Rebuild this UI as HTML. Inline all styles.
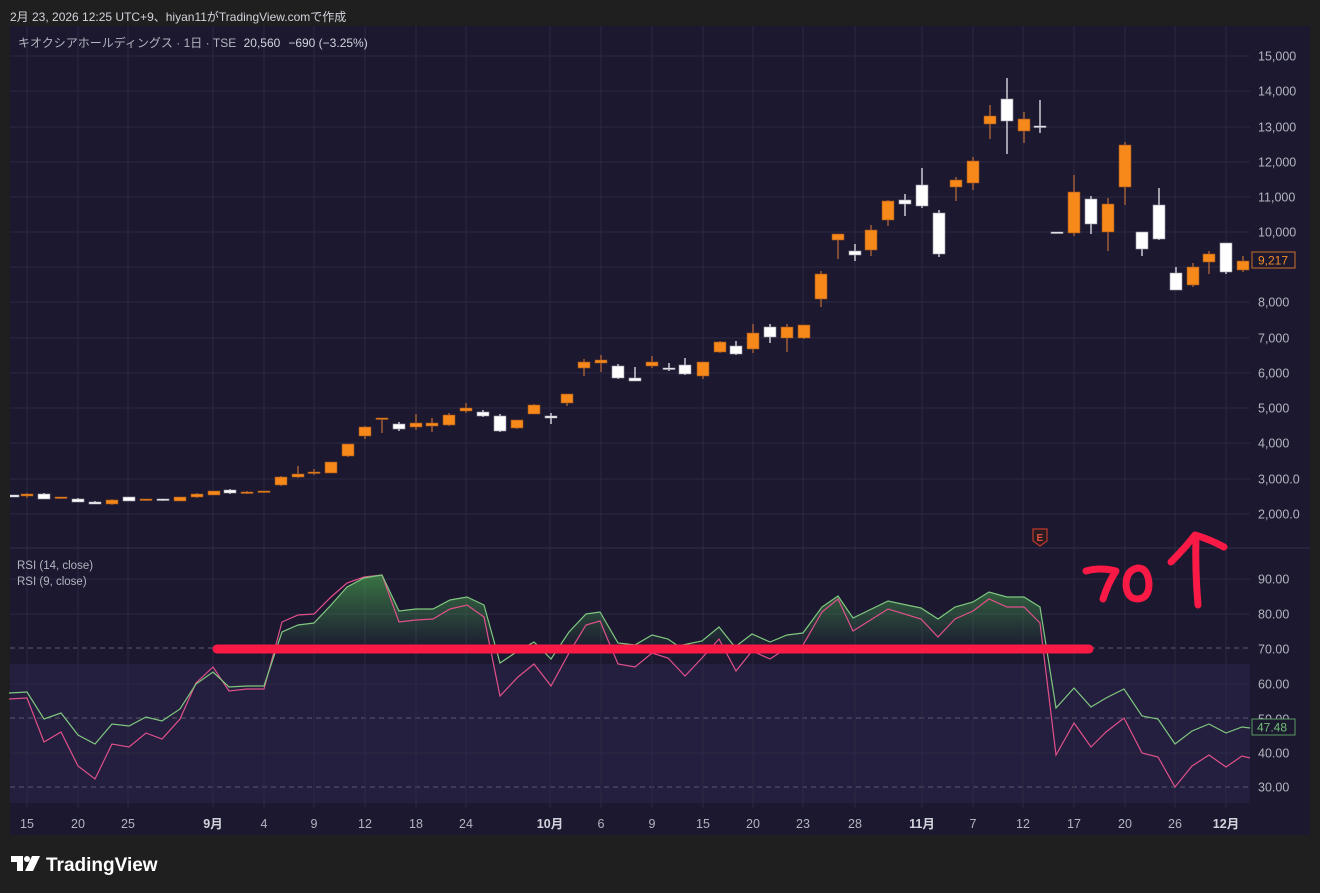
<!DOCTYPE html>
<html><head><meta charset="utf-8">
<style>
html,body{margin:0;padding:0;background:#1f1f1f;width:1320px;height:893px;overflow:hidden;font-family:"Liberation Sans","Noto Sans CJK JP",sans-serif;}
svg text{font-family:"Liberation Sans","Noto Sans CJK JP",sans-serif;}
</style></head><body>
<svg id="s" width="1320" height="893" xmlns="http://www.w3.org/2000/svg">
<defs>
<linearGradient id="gf" x1="0" y1="575" x2="0" y2="648" gradientUnits="userSpaceOnUse">
<stop offset="0" stop-color="#4caf50" stop-opacity="0.6"/>
<stop offset="1" stop-color="#4caf50" stop-opacity="0.02"/>
</linearGradient>
<clipPath id="above"><rect x="10" y="548" width="1240" height="100"/></clipPath>
<clipPath id="plot"><rect x="10" y="26" width="1240" height="782"/></clipPath>
</defs>
<rect x="0" y="0" width="1320" height="893" fill="#1f1f1f"/>
<text x="10" y="21" font-size="12" fill="#d1d4dc">2月 23, 2026 12:25 UTC+9、hiyan11がTradingView.comで作成</text>
<rect x="10" y="26" width="1300" height="809" fill="#1b1830"/>
<rect x="10" y="664" width="1240" height="139" fill="#241f3e"/>
<g id="grid" stroke="#2b2843" stroke-width="1"></g>
<line x1="10" y1="548" x2="1310" y2="548" stroke="#33304a" stroke-width="1"/>
<g id="rsi"></g>
<g id="candles" clip-path="url(#plot)"></g>
<g id="axis" font-size="12.5" fill="#b2b5be"></g>
<text x="18" y="47" font-size="12" fill="#b2b5be">キオクシアホールディングス · 1日 · TSE <tspan fill="#d1d4dc" dx="4">20,560</tspan><tspan fill="#d1d4dc" dx="8">−690 (−3.25%)</tspan></text>
<text x="17" y="569" font-size="11.5" fill="#b2b5be">RSI (14, close)</text>
<text x="17" y="585" font-size="11.5" fill="#b2b5be">RSI (9, close)</text>
<!-- E icon -->
<path d="M1033 529 h14 v12 l-7 5 l-7 -5 z" fill="#2a1a22" stroke="#c0392b" stroke-width="1.2"/>
<text x="1036.5" y="541" font-size="10" fill="#e05040" font-weight="bold">E</text>
<!-- handwriting -->
<line x1="217" y1="649" x2="1089" y2="649" stroke="#fb1a46" stroke-width="9" stroke-linecap="round"/>
<g fill="none" stroke="#fb1a46" stroke-width="7" stroke-linecap="round" stroke-linejoin="round">
<path d="M1086 571 q14 -4 30 0 q-8 12 -13 28"/>
<path d="M1138 568 q-12 2 -12 17 q1 14 12 14 q11 -1 11 -15 q-1 -16 -11 -16z"/>
<path d="M1198 605 q-3 -35 -2 -69"/>
<path d="M1171 562 q14 -14 24 -27 q14 4 29 12"/>
</g>
<!-- tags -->
<rect x="1252" y="252" width="43" height="16" fill="#1b1830" stroke="#c8702a" stroke-width="1"/>
<text x="1258" y="264.5" font-size="12" fill="#f08a2a">9,217</text>
<rect x="1252" y="719" width="43" height="16" fill="#1b1830" stroke="#5a9a62" stroke-width="1"/>
<text x="1257" y="731.5" font-size="12" fill="#6fbf73">47.48</text>
<!-- logo -->
<g fill="#ffffff">
<path d="M11 856 h12 v15 h-6 v-9 h-6 z"/>
<circle cx="27" cy="859" r="3"/>
<path d="M32 856 h8 l-7 15 h-8 z"/>
</g>
<text x="46" y="871" font-size="19" font-weight="bold" fill="#ffffff">TradingView</text>
<script>
const NS="http://www.w3.org/2000/svg";
function el(p,t,a,txt){const e=document.createElementNS(NS,t);for(const k in a)e.setAttribute(k,a[k]);if(txt!=null)e.textContent=txt;p.appendChild(e);return e;}
const grid=document.getElementById('grid'),axis=document.getElementById('axis');
const py=[56,91,127,162,197,232,267,302,338,373,408,443,479,514];
const pl=["15,000","14,000","13,000","12,000","11,000","10,000","9,000","8,000","7,000","6,000","5,000","4,000","3,000.0","2,000.0"];
py.forEach((y,i)=>{el(grid,'line',{x1:10,x2:1250,y1:y,y2:y});if(i!=6)el(axis,'text',{x:1258,y:y+4.5},pl[i]);});
const ry=[579,614,684,753];
ry.forEach(y=>el(grid,'line',{x1:10,x2:1250,y1:y,y2:y}));
[[579,"90.00"],[614,"80.00"],[649,"70.00"],[684,"60.00"],[719,"50.00"],[753,"40.00"],[787,"30.00"]].forEach(a=>el(axis,'text',{x:1258,y:a[0]+4.5},a[1]));
[648,718,787].forEach(y=>el(grid,'line',{x1:10,x2:1250,y1:y,y2:y,stroke:'#5d5a72','stroke-dasharray':'5,4'}));
const tx=[[27,"15"],[78,"20"],[128,"25"],[213,"9月",1],[264,"4"],[314,"9"],[365,"12"],[416,"18"],[466,"24"],[550,"10月",1],[601,"6"],[652,"9"],[703,"15"],[753,"20"],[803,"23"],[855,"28"],[922,"11月",1],[973,"7"],[1023,"12"],[1074,"17"],[1125,"20"],[1175,"26"],[1226,"12月",1]];
tx.forEach(a=>{el(grid,'line',{x1:a[0],x2:a[0],y1:26,y2:808});const t=el(axis,'text',{x:a[0],y:828,'text-anchor':'middle'},a[1]);if(a[2]){t.setAttribute('font-weight','bold');t.setAttribute('fill','#d1d4dc');}});
// candles [x,top,bot,wt,wb,type]
const C=[[13,495,497,495,497,'w'],[27,494,496,493,498,'o'],[44,494,499,493,499,'w'],[61,497,498,497,499,'o'],[78,499,502,498,502,'w'],[95,502,504,501,504,'w'],[112,500,504,499,505,'o'],[129,497,501,497,501,'w'],[146,499,500,499,501,'o'],[163,499,500,499,501,'w'],[180,497,501,497,501,'o'],[197,494,497,493,498,'o'],[214,491,495,491,495,'o'],[230,490,493,489,494,'w'],[247,492,493,491,494,'o'],[264,491,492,491,493,'o'],[281,477,485,476,486,'o'],[298,474,477,466,478,'o'],[314,472,473,469,475,'o'],[331,462,473,462,473,'o'],[348,444,456,444,457,'o'],[365,427,436,426,439,'o'],[382,418,419,418,433,'o'],[399,424,429,422,431,'w'],[416,423,427,414,430,'o'],[432,423,426,418,432,'o'],[449,415,425,413,426,'o'],[466,408,411,403,413,'o'],[483,412,416,410,417,'w'],[500,416,431,414,432,'w'],[517,420,428,420,429,'o'],[534,405,414,404,414,'o'],[551,416,418,413,424,'w'],[567,394,403,394,406,'o'],[584,362,368,359,376,'o'],[601,360,363,355,372,'o'],[618,366,378,364,379,'w'],[635,378,381,367,381,'w'],[652,362,366,356,368,'o'],[669,368,368.8,363,371,'w'],[685,365,374,358,375,'w'],[703,362,376,362,379,'o'],[720,342,352,341,353,'o'],[736,346,354,341,355,'w'],[753,333,349,324,353,'o'],[770,327,337,324,343,'w'],[787,327,338,324,352,'o'],[804,325,338,325,339,'o'],[821,274,299,271,307,'o'],[838,234,240,234,259,'o'],[855,251,255,244,261,'w'],[871,230,250,225,256,'o'],[888,201,220,200,226,'o'],[905,200,204,194,216,'w'],[922,185,206,168,208,'w'],[939,213,254,210,257,'w'],[956,180,187,177,201,'o'],[973,161,183,157,190,'o'],[990,116,124,105,139,'o'],[1007,99,121,78,154,'w'],[1024,119,131,112,143,'o'],[1040,126,127.5,100,133,'w'],[1057,232,233,232,233,'w'],[1074,192,233,175,236,'o'],[1091,199,224,196,234,'w'],[1108,204,232,198,251,'o'],[1125,145,187,142,205,'o'],[1142,232,249,232,256,'w'],[1159,205,239,188,240,'w'],[1176,273,290,267,290,'w'],[1193,267,285,263,287,'o'],[1209,254,262,251,274,'o'],[1226,243,272,243,274,'w'],[1243,261,270,256,272,'o']];
const cg=document.getElementById('candles');
C.forEach(c=>{const o=c[5]=='o';el(cg,'line',{x1:c[0],x2:c[0],y1:c[3],y2:c[4],stroke:o?'#b4683a':'#e8e8ee','stroke-width':1.3});el(cg,'rect',{x:c[0]-6,y:c[1],width:12,height:Math.max(1.5,c[2]-c[1]),fill:o?'#f7891b':'#ffffff',stroke:o?'#9a5220':'#9a9aa6','stroke-width':0.6});});
const G=[[9,693],[27,692],[44,719],[61,713],[78,735],[95,744],[112,724],[129,726],[146,717],[162,721],[180,709],[196,684],[213,672],[229,687],[247,686],[264,686],[282,632],[298,625],[314,623],[331,605],[347,587],[364,578],[382,575],[399,611],[416,609],[433,609],[450,600],[467,597],[484,605],[500,663],[518,651],[534,642],[551,659],[569,632],[586,614],[600,612],[618,643],[635,645],[652,635],[668,639],[678,646],[702,641],[719,627],[735,647],[752,634],[770,642],[787,635],[803,633],[822,607],[838,596],[853,618],[888,601],[921,608],[938,619],[955,607],[973,602],[989,592],[1007,597],[1024,597],[1040,607],[1056,708],[1074,688],[1091,707],[1106,698],[1124,689],[1142,716],[1158,719],[1175,744],[1192,731],[1209,724],[1226,733],[1242,727],[1250,728]];
const P=[[9,699],[27,698],[44,742],[61,732],[78,766],[95,779],[112,744],[129,747],[146,733],[162,739],[180,719],[196,683],[213,667],[229,691],[247,689],[264,689],[282,622],[298,615],[314,614],[331,597],[347,583],[364,577],[382,575],[399,622],[416,620],[433,619],[450,609],[467,605],[484,617],[500,696],[518,677],[534,664],[551,686],[569,653],[586,625],[600,621],[618,664],[635,667],[652,653],[668,658],[685,676],[702,658],[719,639],[736,671],[752,651],[770,659],[787,648],[803,645],[822,612],[838,599],[853,631],[888,609],[921,619],[938,637],[955,619],[973,611],[989,599],[1007,607],[1024,607],[1040,623],[1056,755],[1074,723],[1091,747],[1106,732],[1124,718],[1142,753],[1158,757],[1175,787],[1192,766],[1209,755],[1226,767],[1242,756],[1250,758]];
const rg=document.getElementById('rsi');
const pts=a=>a.map(p=>p.join(',')).join(' ');
el(rg,'polygon',{points:'9,648 '+pts(G)+' 1250,648',fill:'url(#gf)','clip-path':'url(#above)'});
el(rg,'polyline',{points:pts(P),fill:'none',stroke:'#e0508a','stroke-width':1.2});
el(rg,'polyline',{points:pts(G),fill:'none',stroke:'#7fc77f','stroke-width':1.2});
</script>
</svg>
</body></html>
